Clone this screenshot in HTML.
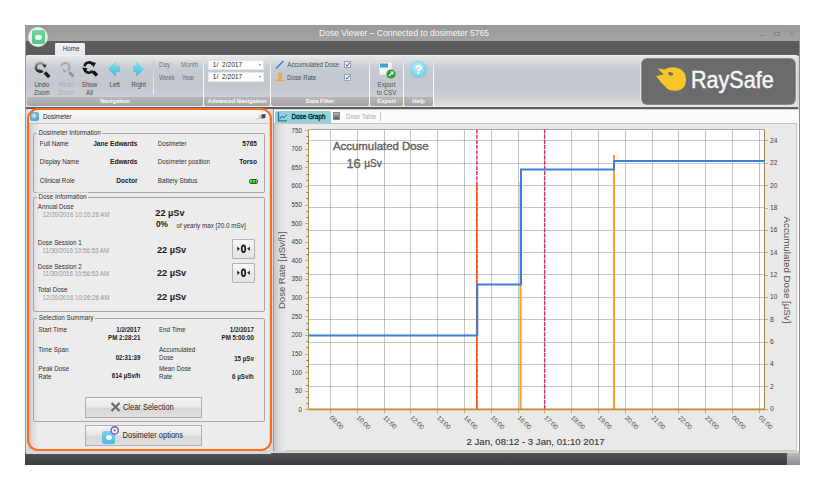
<!DOCTYPE html>
<html><head><meta charset="utf-8">
<style>
*{margin:0;padding:0;box-sizing:border-box}
html,body{width:825px;height:490px;background:#fff;overflow:hidden;font-family:"Liberation Sans",sans-serif;color:#333}
.a{position:absolute;white-space:nowrap}
.t6{font-size:6.2px;line-height:7px;transform:scaleY(1.15);transform-origin:0 50%}
.lbl{position:absolute;top:97px;height:8.5px;background:linear-gradient(#b6b8ba,#a2a4a7);color:#fbfbfb;font-size:5.8px;font-weight:bold;line-height:8px;border-radius:0 0 2px 2px;text-align:center;white-space:nowrap}
.gsep{position:absolute;top:56px;width:1px;height:50px;background:linear-gradient(#d0d2d4,#f8f8f8 30%,#f8f8f8)}
.btxt{position:absolute;font-size:6.2px;line-height:6.6px;text-align:center;color:#4a4a4a;white-space:nowrap;transform:scaleY(1.15);transform-origin:50% 50%}
</style></head><body>
<!-- window frame -->
<div class="a" style="left:25px;top:25px;width:775px;height:440px;background:#d4d4d4"></div>
<!-- title bar -->
<div class="a" style="left:25px;top:25px;width:775px;height:16px;background:linear-gradient(#999,#a4a4a4)"></div>
<div class="a" style="left:319px;top:28px;font-size:8.55px;line-height:10px;color:#f4f4f4">Dose Viewer – Connected to dosimeter 5765</div>
<!-- window controls -->
<div class="a" style="left:760px;top:34.5px;width:4.5px;height:1px;background:#858585"></div>
<div class="a" style="left:774px;top:32px;width:6px;height:3.8px;border:0.8px solid #858585;border-top-width:1.2px"></div>
<svg class="a" style="left:788px;top:30px" width="7" height="7"><path d="M1.2 1.2L5.6 5.8M5.6 1.2L1.2 5.8" stroke="#858585" stroke-width="0.9"/></svg>
<!-- tab row -->
<div class="a" style="left:25px;top:41px;width:775px;height:15px;background:#5c5c5c"></div>
<div class="a" style="left:55px;top:43px;width:30px;height:13px;background:linear-gradient(#eef1f8,#e3e7ef);border-radius:1px 1px 0 0"></div>
<div class="a" style="left:62.8px;top:44.6px;font-size:6.3px;line-height:8px;color:#3a3a3a;transform:scaleY(1.15)">Home</div>
<!-- app button -->
<div class="a" style="left:28.2px;top:27.1px;width:20px;height:20px;border-radius:50%;background:radial-gradient(circle at 50% 45%,#fafafa,#e6e6e6 75%,#cfcfcf);box-shadow:0 0 0.8px #777"></div>
<div class="a" style="left:31.8px;top:30.2px;width:13px;height:13.4px;border-radius:2px;background:linear-gradient(#74d69a,#54c884)"></div>
<div class="a" style="left:35.3px;top:34.5px;width:6.5px;height:5.5px;border-radius:45%;background:#f6fff9"></div>
<!-- ribbon -->
<div class="a" style="left:26px;top:55px;width:772px;height:52px;background:linear-gradient(#e6e9ec 0%,#d6dadf 12%,#c6cbd2 25%,#c2c7ce 55%,#cbcfd5 80%,#dfe2e6 100%);border-top:1px solid #eef0f2;border-radius:2px"></div>
<div class="a" style="left:26px;top:105.5px;width:772px;height:1px;background:#e8e8e8"></div>
<div class="a" style="left:26px;top:107px;width:772px;height:1.5px;background:#5e5e5e"></div>


<!-- ribbon groups -->
<div class="gsep" style="left:203px"></div>
<div class="gsep" style="left:270px"></div>
<div class="gsep" style="left:369px"></div>
<div class="gsep" style="left:403px"></div>
<div class="gsep" style="left:433px"></div>
<div class="lbl" style="left:27px;width:176px">Navigation</div>
<div class="lbl" style="left:204px;width:66px">Advanced Navigation</div>
<div class="lbl" style="left:271px;width:98px">Data Filter</div>
<div class="lbl" style="left:370px;width:33px">Export</div>
<div class="lbl" style="left:404px;width:29px">Help</div>
<div class="a" style="left:153px;top:61px;width:1px;height:33px;background:linear-gradient(#c0c3c6,#f2f3f4)"></div>
<!-- nav icons -->
<svg class="a" style="left:30px;top:58px" width="125" height="22" viewBox="0 0 125 22">
  <defs>
    <linearGradient id="gd" x1="0" y1="0" x2="0" y2="1"><stop offset="0" stop-color="#9a9a9a"/><stop offset="1" stop-color="#2a2a2a"/></linearGradient>
    <linearGradient id="cy" x1="0" y1="0" x2="0" y2="1"><stop offset="0" stop-color="#8fe0f2"/><stop offset="1" stop-color="#3bb8d8"/></linearGradient>
  </defs>
  <!-- undo -->
  <path d="M14.5 8.5A4.3 4.3 0 1 0 12.8 12.8" fill="none" stroke="url(#gd)" stroke-width="2.7"/>
  <path d="M12.6 6.8L17 6.8L14.8 10.2Z" fill="#3a3a3a"/>
  <path d="M9.2 10.8L12.6 13.6L9.6 15.4Z" fill="#2a2a2a"/>
  <path d="M14.8 14.5L19.3 19" stroke="#1e1e1e" stroke-width="3.4"/>
  <!-- redo -->
  <path d="M31 8.5A4.3 4.3 0 1 1 37.8 12.8" fill="none" stroke="#a6acb8" stroke-width="2.5"/>
  <path d="M33.2 10.5L36.5 13.5L33.5 15.2Z" fill="#9aa2ae"/>
  <path d="M39.2 14.2L43.5 18.5" stroke="#8c929c" stroke-width="3"/>
  <!-- show all -->
  <path d="M63 7A4.4 4.4 0 0 0 54.6 8.3" fill="none" stroke="#1a1a1a" stroke-width="2.6"/>
  <path d="M54.8 11.6A4.4 4.4 0 0 0 62.6 12.8" fill="none" stroke="#1a1a1a" stroke-width="2.6"/>
  <path d="M61 4L66 4.8L63.5 9.2Z" fill="#111"/>
  <path d="M52.2 9.4L54.6 14.2L57.6 10.2Z" fill="#111"/>
  <path d="M63 13.5L67 17.5" stroke="#111" stroke-width="3.3"/>
  <!-- left arrow -->
  <path d="M78 11L85.5 3.5L86.5 8H90V14H86.5L85.5 18.5Z" fill="url(#cy)"/>
  <!-- right arrow -->
  <path d="M114 11L106.5 3.5L105.5 8H103V14H105.5L106.5 18.5Z" fill="url(#cy)"/>
</svg>
<div class="btxt" style="left:30.8px;top:81.8px;width:22px">Undo<br>Zoom</div>
<div class="btxt" style="left:55px;top:81.8px;width:22px;color:#a8acb2">Redo<br>Zoom</div>
<div class="btxt" style="left:78.5px;top:81.8px;width:22px">Show<br>All</div>
<div class="btxt" style="left:103.7px;top:82px;width:22px">Left</div>
<div class="btxt" style="left:126.8px;top:82px;width:24px">Right</div>
<div class="a t6" style="left:159px;top:61.2px;color:#707070">Day</div>
<div class="a t6" style="left:181px;top:61.2px;color:#707070">Month</div>
<div class="a t6" style="left:159px;top:74px;color:#707070">Week</div>
<div class="a t6" style="left:181.8px;top:74px;color:#707070">Year</div>
<!-- adv nav -->
<div class="a" style="left:208px;top:59.6px;width:56px;height:10.4px;background:#fdfdfd;border:0.5px solid #e4e6e8"></div>
<div class="a" style="left:208px;top:71.6px;width:56px;height:10.4px;background:#fdfdfd;border:0.5px solid #e4e6e8"></div>
<div class="a" style="left:212.8px;top:61.1px;font-size:6.6px;line-height:7px;color:#2a2a2a;white-space:pre;transform:scaleY(1.1)">1/  2/2017</div>
<div class="a" style="left:212.8px;top:73.1px;font-size:6.6px;line-height:7px;color:#2a2a2a;white-space:pre;transform:scaleY(1.1)">1/  2/2017</div>
<div class="a" style="left:259px;top:63.5px;width:0;height:0;border-left:1.8px solid transparent;border-right:1.8px solid transparent;border-top:2.2px solid #8a8a8a"></div>
<div class="a" style="left:259px;top:75.5px;width:0;height:0;border-left:1.8px solid transparent;border-right:1.8px solid transparent;border-top:2.2px solid #8a8a8a"></div>
<!-- data filter -->
<svg class="a" style="left:274px;top:59px" width="12" height="24">
  <path d="M2 9.5L9.5 2" stroke="#3a78d8" stroke-width="1.5"/>
  <path d="M1.5 21.5H5V14.5H7V21.5H10.5" fill="none" stroke="#f4a028" stroke-width="1.3"/>
</svg>
<div class="a t6" style="left:287.3px;top:61.4px;color:#505050">Accumulated Dose</div>
<div class="a t6" style="left:287px;top:74px;color:#505050">Dose Rate</div>
<div class="a" style="left:344px;top:61px;width:7px;height:7px;background:linear-gradient(#e4e8ee,#fafbfc);border:1px solid #9aa4b0"></div>
<div class="a" style="left:344px;top:74px;width:7px;height:7px;background:linear-gradient(#e4e8ee,#fafbfc);border:1px solid #9aa4b0"></div>
<svg class="a" style="left:344px;top:61px" width="7" height="20">
  <path d="M1.8 3.6L3 5.2L5.6 1.6" fill="none" stroke="#2a4aa0" stroke-width="0.9"/>
  <path d="M1.8 16.6L3 18.2L5.6 14.6" fill="none" stroke="#2a4aa0" stroke-width="0.9"/>
</svg>
<!-- export -->
<svg class="a" style="left:376px;top:60px" width="22" height="20">
  <rect x="3" y="2" width="13" height="13" fill="#f4f6f8" stroke="#c6c9cc" stroke-width="0.7"/>
  <rect x="4" y="3.5" width="8" height="4" fill="#3aa0e0"/>
  <circle cx="15" cy="14" r="4.6" fill="#2f9a3a"/>
  <path d="M13 16L17 12M14.5 12H17V14.5" fill="none" stroke="#fff" stroke-width="1.1"/>
</svg>
<div class="btxt" style="left:375.5px;top:82px;width:22px;color:#505050">Export<br>to CSV</div>
<!-- help -->
<div class="a" style="left:410px;top:61px;width:17px;height:17px;border-radius:50%;background:radial-gradient(circle at 45% 35%,#c6eef8,#7fd0ea 60%,#5fbedf);box-shadow:0 0 1px #aac"></div>
<div class="a" style="left:413.5px;top:61.5px;width:10px;text-align:center;font-size:13px;line-height:16px;font-weight:bold;color:#fff">?</div>
<!-- raysafe logo -->
<div class="a" style="left:640px;top:57.5px;width:157px;height:47.5px;border-radius:6px;background:#e6e8ea"></div>
<div class="a" style="left:642px;top:59px;width:153px;height:44.5px;border-radius:5px;background:#6b6b6b;box-shadow:0 0 0 1px #8c8c8c"></div>
<svg class="a" style="left:0;top:0" width="825" height="120"><path d="M657.6 68.3L664.3 69.4Q668 67.2 673.6 67.3Q686 68.5 686 80Q685.5 90.8 675 90.8Q668 90.8 665 86.3Q661 83 659.3 79.9L656 76L663.6 74.4Z" fill="#f9c52b"/><ellipse cx="670.7" cy="73.8" rx="2.5" ry="1.7" transform="rotate(15 670.7 73.8)" fill="#6b6b6b"/></svg>
<div class="a" style="left:691px;top:66px;font-size:24.5px;line-height:28px;color:#f6f6f6;-webkit-text-stroke:0.5px #f6f6f6;transform:scaleX(0.88);transform-origin:0 0">RaySafe</div>



<!-- chart panel -->
<div class="a" style="left:271px;top:108.5px;width:529px;height:345px;background:#d8d8d8"></div>
<div class="a" style="left:273px;top:108.5px;width:526.5px;height:343px;background:#fbfbfb;border:1px solid #cfcfcf"></div>
<div class="a" style="left:274px;top:122.5px;width:523px;height:328.5px;background:#e9e9e9;border-top:1px solid #c8c4c0;border-right:1px solid #c8c4c0;border-bottom:1px solid #c8c4c0"></div>
<div class="a" style="left:274px;top:123.5px;width:12px;height:327px;background:linear-gradient(90deg,#c4c4c4,#e0e0e0 50%,#e9e9e9)"></div>
<div class="a" style="left:273px;top:109px;width:1px;height:342px;background:#9a9a9a"></div>
<div class="a" style="left:275px;top:111px;width:56px;height:11.5px;background:#8fd3df;border-radius:2px 2px 0 0"></div>
<svg class="a" style="left:277px;top:111px" width="11" height="11"><path d="M1.5 1V9.8H10" fill="none" stroke="#2a7898" stroke-width="1.2"/><path d="M2.5 8L5 5.2L6.8 6.8L9.8 3.5" fill="none" stroke="#1a5a90" stroke-width="1"/></svg>
<div class="a" style="top:112.60px;font-size:6.3px;line-height:8px;color:#0c3040;left:291.50px;transform:scaleY(1.15) ;transform-origin:0 50%;-webkit-text-stroke:0.35px #0c3040">Dose Graph</div>
<div class="a" style="left:333px;top:112px;width:7px;height:8px;background:linear-gradient(#b8bcc0,#50545a);border:0.5px solid #888"></div>
<div class="a" style="top:112.70px;font-size:6.1px;line-height:8px;color:#aaa;left:346.00px;transform:scaleY(1.15) ;transform-origin:0 50%;">Dose Table</div>
<div class="a" style="left:380px;top:112px;width:1px;height:9px;background:#c4c4c4"></div>
<svg class="a" style="left:0;top:0" width="825" height="490" font-family="Liberation Sans">
<rect x="308.5" y="129.5" width="456.5" height="280.0" fill="#fff"/>
<g stroke="#8c8c8c" stroke-width="1" stroke-dasharray="1 1"><path d="M308.5 386.5H765"/><path d="M308.5 364.5H765"/><path d="M308.5 342.5H765"/><path d="M308.5 319.5H765"/><path d="M308.5 297.5H765"/><path d="M308.5 274.5H765"/><path d="M308.5 252.5H765"/><path d="M308.5 230.5H765"/><path d="M308.5 207.5H765"/><path d="M308.5 185.5H765"/><path d="M308.5 163.5H765"/><path d="M308.5 140.5H765"/><path d="M330.5 129.5V409.5"/><path d="M357.5 129.5V409.5"/><path d="M384.5 129.5V409.5"/><path d="M410.5 129.5V409.5"/><path d="M437.5 129.5V409.5"/><path d="M464.5 129.5V409.5"/><path d="M491.5 129.5V409.5"/><path d="M518.5 129.5V409.5"/><path d="M544.5 129.5V409.5"/><path d="M571.5 129.5V409.5"/><path d="M598.5 129.5V409.5"/><path d="M625.5 129.5V409.5"/><path d="M652.5 129.5V409.5"/><path d="M678.5 129.5V409.5"/><path d="M705.5 129.5V409.5"/><path d="M732.5 129.5V409.5"/><path d="M759.5 129.5V409.5"/></g>
<path d="M308.5 129.5H765" stroke="#a8a8a8" stroke-width="1"/>
<path d="M308.5 129.5V409.5" stroke="#a0924e" stroke-width="1"/>
<path d="M764.5 129.5V409.5" stroke="#9a8a50" stroke-width="1"/>
<path d="M305 130.5H308M305 149.5H308M305 167.5H308M305 186.5H308M305 205.5H308M305 223.5H308M305 242.5H308M305 260.5H308M305 279.5H308M305 298.5H308M305 316.5H308M305 335.5H308M305 354.5H308M305 372.5H308M305 391.5H308M305 409.5H308M765 409.5H768M765 386.5H768M765 364.5H768M765 342.5H768M765 319.5H768M765 297.5H768M765 275.5H768M765 252.5H768M765 230.5H768M765 208.5H768M765 185.5H768M765 163.5H768M765 140.5H768M330.5 409V413.5M357.5 409V413.5M384.5 409V413.5M410.5 409V413.5M437.5 409V413.5M464.5 409V413.5M491.5 409V413.5M518.5 409V413.5M544.5 409V413.5M571.5 409V413.5M598.5 409V413.5M625.5 409V413.5M652.5 409V413.5M678.5 409V413.5M705.5 409V413.5M732.5 409V413.5M759.5 409V413.5" stroke="#c0b080" stroke-width="1" fill="none"/><path d="M306.5 136.5H308M306.5 143.5H308M306.5 155.5H308M306.5 161.5H308M306.5 174.5H308M306.5 180.5H308M306.5 192.5H308M306.5 198.5H308M306.5 211.5H308M306.5 217.5H308M306.5 229.5H308M306.5 236.5H308M306.5 248.5H308M306.5 254.5H308M306.5 267.5H308M306.5 273.5H308M306.5 285.5H308M306.5 292.5H308M306.5 304.5H308M306.5 310.5H308M306.5 323.5H308M306.5 329.5H308M306.5 341.5H308M306.5 347.5H308M306.5 360.5H308M306.5 366.5H308M306.5 378.5H308M306.5 385.5H308M306.5 397.5H308M306.5 403.5H308" stroke="#7a6a40" stroke-width="1" fill="none"/>
<g font-size="6.35" fill="#3c3c3c"><text x="302" y="132.5" text-anchor="end">750</text><text x="302" y="151.1" text-anchor="end">700</text><text x="302" y="169.7" text-anchor="end">650</text><text x="302" y="188.3" text-anchor="end">600</text><text x="302" y="207.0" text-anchor="end">550</text><text x="302" y="225.6" text-anchor="end">500</text><text x="302" y="244.2" text-anchor="end">450</text><text x="302" y="262.8" text-anchor="end">400</text><text x="302" y="281.4" text-anchor="end">350</text><text x="302" y="300.0" text-anchor="end">300</text><text x="302" y="318.6" text-anchor="end">250</text><text x="302" y="337.2" text-anchor="end">200</text><text x="302" y="355.9" text-anchor="end">150</text><text x="302" y="374.5" text-anchor="end">100</text><text x="302" y="393.1" text-anchor="end">50</text><text x="302" y="411.7" text-anchor="end">0</text></g>
<g font-size="6.6" fill="#3c3c3c"><text x="770" y="411.1">0</text><text x="770" y="388.7">2</text><text x="770" y="366.4">4</text><text x="770" y="344.0">6</text><text x="770" y="321.7">8</text><text x="770" y="299.3">10</text><text x="770" y="276.9">12</text><text x="770" y="254.6">14</text><text x="770" y="232.2">16</text><text x="770" y="209.9">18</text><text x="770" y="187.5">20</text><text x="770" y="165.1">22</text><text x="770" y="142.8">24</text></g>
<g font-size="6.6" fill="#505050"><text transform="translate(330.9 416.5) rotate(45)" x="0" y="2.3">09:00</text><text transform="translate(357.7 416.5) rotate(45)" x="0" y="2.3">10:00</text><text transform="translate(384.5 416.5) rotate(45)" x="0" y="2.3">11:00</text><text transform="translate(411.3 416.5) rotate(45)" x="0" y="2.3">12:00</text><text transform="translate(438.1 416.5) rotate(45)" x="0" y="2.3">13:00</text><text transform="translate(464.9 416.5) rotate(45)" x="0" y="2.3">14:00</text><text transform="translate(491.8 416.5) rotate(45)" x="0" y="2.3">15:00</text><text transform="translate(518.6 416.5) rotate(45)" x="0" y="2.3">16:00</text><text transform="translate(545.4 416.5) rotate(45)" x="0" y="2.3">17:00</text><text transform="translate(572.2 416.5) rotate(45)" x="0" y="2.3">18:00</text><text transform="translate(599.0 416.5) rotate(45)" x="0" y="2.3">19:00</text><text transform="translate(625.8 416.5) rotate(45)" x="0" y="2.3">20:00</text><text transform="translate(652.6 416.5) rotate(45)" x="0" y="2.3">21:00</text><text transform="translate(679.4 416.5) rotate(45)" x="0" y="2.3">22:00</text><text transform="translate(706.2 416.5) rotate(45)" x="0" y="2.3">23:00</text><text transform="translate(733.0 416.5) rotate(45)" x="0" y="2.3">00:00</text><text transform="translate(759.9 416.5) rotate(45)" x="0" y="2.3">01:00</text></g>
<path d="M476.9 129.5V409.5" stroke="#e22260" stroke-width="1.4" stroke-dasharray="4 1.2"/>
<path d="M544.7 129.5V409.5" stroke="#e22260" stroke-width="1.3" stroke-dasharray="4 1.2"/>
<path d="M476.7 409V183" stroke="#f05a28" stroke-width="1.6"/>
<path d="M520.5 409V182" stroke="#f8a028" stroke-width="2"/>
<path d="M614 409V155" stroke="#f8a028" stroke-width="2"/>
<path d="M308.5 335.4H477.3V284.5H521V169.6H614V161H765" fill="none" stroke="#3a7fd8" stroke-width="2"/>
<path d="M308.5 409.3H765" stroke="#c8862a" stroke-width="1.8"/>
<text x="282.5" y="309" transform="rotate(-90 282.5 309)" font-size="9.5" fill="#555" dominant-baseline="middle">Dose Rate [µSv/h]</text>
<text x="786.8" y="216.5" transform="rotate(90 786.8 216.5)" font-size="9.75" fill="#505050" dominant-baseline="middle">Accumulated Dose [µSv]</text>
<text x="466.5" y="444.5" font-size="9.6" fill="#3a3a3a" stroke="#3a3a3a" stroke-width="0.15">2 Jan, 08:12 - 3 Jan, 01:10 2017</text>
<text x="333" y="150.2" font-size="11.4" fill="#626262" stroke="#626262" stroke-width="0.4">Accumulated Dose</text>
<text x="346.5" y="168" font-size="12.8" fill="#626262" stroke="#626262" stroke-width="0.35">16 <tspan font-size="10" dy="-1.5">µSv</tspan></text>
</svg>
<div class="a" style="left:798.5px;top:41px;width:1.5px;height:424px;background:#8c8c8c"></div>
<div class="a" style="left:25px;top:41px;width:1.2px;height:424px;background:#9a9a9a"></div>
<!-- status bar -->
<div class="a" style="left:25px;top:453px;width:775px;height:12px;background:linear-gradient(#50535a,#3a3c40)"></div>
<div class="a" style="left:787px;top:453px;width:13px;height:12px;background:linear-gradient(#b8bcc0,#888c90)"></div>

<!-- left panel -->
<div class="a" style="left:26px;top:108.5px;width:245px;height:345px;background:#d8d8d8"></div>
<div class="a" style="left:29px;top:110px;width:240px;height:340px;background:#ececec"></div>
<div class="a" style="left:29px;top:123px;width:10px;height:327px;background:linear-gradient(90deg,#c8c6c6,#dcdcdc 35%,#ececec)"></div>
<div class="a" style="left:29px;top:110px;width:240px;height:13.5px;background:linear-gradient(#fbfbfb,#e8e8e8);border-bottom:1px solid #c4c4c4"></div>
<div class="a" style="left:30.2px;top:112.4px;width:8.5px;height:8.2px;border-radius:2.5px;background:radial-gradient(circle at 45% 40%,#f0dada 0,#d8d0d4 18%,#58b4d6 45%,#3d9fc8)"></div>
<div class="a" style="top:112.60px;font-size:6.3px;line-height:8px;color:#262626;left:43.00px;transform:scaleY(1.15) ;transform-origin:0 50%;">Dosimeter</div>
<svg class="a" style="left:255px;top:112px" width="12" height="9"><path d="M1.5 7.5L6.5 4.5" fill="none" stroke="#b8b8b8" stroke-width="0.8"/><path d="M5 2.5V7" stroke="#aaa" stroke-width="0.8"/><path d="M6.5 2.5L10.5 1.8V6L6.5 6.8Z" fill="#4a4a4e"/></svg>
<div class="a" style="left:32.5px;top:132.5px;width:232.0px;height:60.0px;border:1px solid #a6a6a6;border-radius:2px"></div><div class="a" style="top:128.60px;font-size:6.3px;line-height:8px;color:#2e2e2e;left:38.80px;transform:scaleY(1.15) ;transform-origin:0 50%;padding:0 1.5px;background:#ececec;margin-left:-1.5px">Dosimeter Information</div>
<div class="a" style="top:139.70px;font-size:6.3px;line-height:8px;color:#2e2e2e;left:39.80px;transform:scaleY(1.15) ;transform-origin:0 50%;">Full Name</div>
<div class="a" style="top:139.70px;font-size:6.6px;line-height:8px;color:#1a1a1a;font-weight:bold;right:687.50px;text-align:right;transform:scaleY(1.15) ;transform-origin:100% 50%;">Jane Edwards</div>
<div class="a" style="top:139.70px;font-size:6.3px;line-height:8px;color:#2e2e2e;left:157.80px;transform:scaleY(1.15) ;transform-origin:0 50%;">Dosimeter</div>
<div class="a" style="top:139.70px;font-size:6.6px;line-height:8px;color:#1a1a1a;font-weight:bold;right:568.00px;text-align:right;transform:scaleY(1.15) ;transform-origin:100% 50%;">5765</div>
<div class="a" style="top:158.30px;font-size:6.3px;line-height:8px;color:#2e2e2e;left:39.80px;transform:scaleY(1.15) ;transform-origin:0 50%;">Display Name</div>
<div class="a" style="top:158.30px;font-size:6.6px;line-height:8px;color:#1a1a1a;font-weight:bold;right:687.50px;text-align:right;transform:scaleY(1.15) ;transform-origin:100% 50%;">Edwards</div>
<div class="a" style="top:158.30px;font-size:6.3px;line-height:8px;color:#2e2e2e;left:157.80px;transform:scaleY(1.15) ;transform-origin:0 50%;">Dosimeter position</div>
<div class="a" style="top:158.30px;font-size:6.6px;line-height:8px;color:#1a1a1a;font-weight:bold;right:568.00px;text-align:right;transform:scaleY(1.15) ;transform-origin:100% 50%;">Torso</div>
<div class="a" style="top:177.00px;font-size:6.3px;line-height:8px;color:#2e2e2e;left:39.80px;transform:scaleY(1.15) ;transform-origin:0 50%;">Clinical Role</div>
<div class="a" style="top:177.00px;font-size:6.6px;line-height:8px;color:#1a1a1a;font-weight:bold;right:687.50px;text-align:right;transform:scaleY(1.15) ;transform-origin:100% 50%;">Doctor</div>
<div class="a" style="top:177.00px;font-size:6.3px;line-height:8px;color:#2e2e2e;left:157.80px;transform:scaleY(1.15) ;transform-origin:0 50%;">Battery Status</div>
<div class="a" style="left:248.9px;top:178.8px;width:9.2px;height:5.6px;background:linear-gradient(#7ee870,#36b836);border:0.7px solid #2a5a2a;border-radius:1.5px"></div>
<div class="a" style="left:251.8px;top:179.6px;width:0.7px;height:4px;background:#2a7a2a"></div><div class="a" style="left:254.6px;top:179.6px;width:0.7px;height:4px;background:#2a7a2a"></div>
<div class="a" style="left:32.5px;top:197px;width:232.0px;height:114.5px;border:1px solid #a6a6a6;border-radius:2px"></div><div class="a" style="top:193.30px;font-size:6.3px;line-height:8px;color:#2e2e2e;left:38.50px;transform:scaleY(1.15) ;transform-origin:0 50%;padding:0 1.5px;background:#ececec;margin-left:-1.5px">Dose Information</div>
<div class="a" style="top:202.60px;font-size:6.3px;line-height:8px;color:#2e2e2e;left:37.70px;transform:scaleY(1.15) ;transform-origin:0 50%;">Annual Dose</div>
<div class="a" style="top:210.50px;font-size:6.15px;line-height:8px;color:#959595;left:42.60px;transform:scaleY(1.15) ;transform-origin:0 50%;">12/20/2016 10:26:26 AM</div>
<div class="a" style="top:239.10px;font-size:6.3px;line-height:8px;color:#2e2e2e;left:37.70px;transform:scaleY(1.15) ;transform-origin:0 50%;">Dose Session 1</div>
<div class="a" style="top:246.70px;font-size:6.15px;line-height:8px;color:#959595;left:42.60px;transform:scaleY(1.15) ;transform-origin:0 50%;">11/30/2016 10:56:53 AM</div>
<div class="a" style="top:262.60px;font-size:6.3px;line-height:8px;color:#2e2e2e;left:37.70px;transform:scaleY(1.15) ;transform-origin:0 50%;">Dose Session 2</div>
<div class="a" style="top:270.40px;font-size:6.15px;line-height:8px;color:#959595;left:42.60px;transform:scaleY(1.15) ;transform-origin:0 50%;">11/30/2016 10:56:53 AM</div>
<div class="a" style="top:286.30px;font-size:6.3px;line-height:8px;color:#2e2e2e;left:37.70px;transform:scaleY(1.15) ;transform-origin:0 50%;">Total Dose</div>
<div class="a" style="top:294.20px;font-size:6.15px;line-height:8px;color:#959595;left:42.60px;transform:scaleY(1.15) ;transform-origin:0 50%;">12/20/2016 10:26:26 AM</div>
<div class="a" style="top:207.60px;font-size:9.2px;line-height:11px;color:#1a1a1a;font-weight:bold;left:155.30px;">22 µSv</div>
<div class="a" style="top:219.30px;font-size:8.3px;line-height:10px;color:#1a1a1a;font-weight:bold;left:156.00px;">0%</div>
<div class="a" style="top:221.60px;font-size:6.3px;line-height:8px;color:#2e2e2e;left:176.40px;transform:scaleY(1.15) ;transform-origin:0 50%;">of yearly max [20.0 mSv]</div>
<div class="a" style="top:244.70px;font-size:9.2px;line-height:11px;color:#1a1a1a;font-weight:bold;left:156.90px;">22 µSv</div>
<div class="a" style="top:267.70px;font-size:9.2px;line-height:11px;color:#1a1a1a;font-weight:bold;left:156.90px;">22 µSv</div>
<div class="a" style="top:291.60px;font-size:9.2px;line-height:11px;color:#1a1a1a;font-weight:bold;left:156.90px;">22 µSv</div>
<div class="a" style="left:232px;top:239px;width:23px;height:19.5px;background:linear-gradient(#f6f6f6,#e2e2e2);border:1px solid #b4b4b4;border-radius:1px"></div>
<svg class="a" style="left:232px;top:239px" width="23" height="20"><path d="M5.2 7.6L7.8 9.8L5.2 12Z" fill="#222"/><path d="M17.8 7.6L15.2 9.8L17.8 12Z" fill="#222"/><ellipse cx="11.5" cy="9.8" rx="1.75" ry="3.4" fill="none" stroke="#1a1a1a" stroke-width="1.7"/></svg>
<div class="a" style="left:232px;top:263px;width:23px;height:19.5px;background:linear-gradient(#f6f6f6,#e2e2e2);border:1px solid #b4b4b4;border-radius:1px"></div>
<svg class="a" style="left:232px;top:263px" width="23" height="20"><path d="M5.2 7.6L7.8 9.8L5.2 12Z" fill="#222"/><path d="M17.8 7.6L15.2 9.8L17.8 12Z" fill="#222"/><ellipse cx="11.5" cy="9.8" rx="1.75" ry="3.4" fill="none" stroke="#1a1a1a" stroke-width="1.7"/></svg>
<div class="a" style="left:32.5px;top:318px;width:232.0px;height:103.5px;border:1px solid #a6a6a6;border-radius:2px"></div><div class="a" style="top:314.40px;font-size:6.3px;line-height:8px;color:#2e2e2e;left:38.80px;transform:scaleY(1.15) ;transform-origin:0 50%;padding:0 1.5px;background:#ececec;margin-left:-1.5px">Selection Summary</div>
<div class="a" style="top:325.80px;font-size:6.3px;line-height:8px;color:#2e2e2e;left:38.20px;transform:scaleY(1.15) ;transform-origin:0 50%;">Start Time</div>
<div class="a" style="top:345.60px;font-size:6.3px;line-height:8px;color:#2e2e2e;left:38.20px;transform:scaleY(1.15) ;transform-origin:0 50%;">Time Span</div>
<div class="a" style="top:365.40px;font-size:6.3px;line-height:8px;color:#2e2e2e;left:38.20px;transform:scaleY(1.15) ;transform-origin:0 50%;">Peak Dose</div>
<div class="a" style="top:373.20px;font-size:6.3px;line-height:8px;color:#2e2e2e;left:38.20px;transform:scaleY(1.15) ;transform-origin:0 50%;">Rate</div>
<div class="a" style="top:325.80px;font-size:6.3px;line-height:8px;color:#2e2e2e;left:158.90px;transform:scaleY(1.15) ;transform-origin:0 50%;">End Time</div>
<div class="a" style="top:345.50px;font-size:6.3px;line-height:8px;color:#2e2e2e;left:158.90px;transform:scaleY(1.15) ;transform-origin:0 50%;">Accumulated</div>
<div class="a" style="top:353.80px;font-size:6.3px;line-height:8px;color:#2e2e2e;left:158.90px;transform:scaleY(1.15) ;transform-origin:0 50%;">Dose</div>
<div class="a" style="top:365.30px;font-size:6.3px;line-height:8px;color:#2e2e2e;left:158.90px;transform:scaleY(1.15) ;transform-origin:0 50%;">Mean Dose</div>
<div class="a" style="top:373.40px;font-size:6.3px;line-height:8px;color:#2e2e2e;left:158.90px;transform:scaleY(1.15) ;transform-origin:0 50%;">Rate</div>
<div class="a" style="top:325.80px;font-size:6.2px;line-height:8px;color:#1a1a1a;font-weight:bold;right:684.60px;text-align:right;transform:scaleY(1.15) ;transform-origin:100% 50%;">1/2/2017</div>
<div class="a" style="top:334.20px;font-size:6.2px;line-height:8px;color:#1a1a1a;font-weight:bold;right:684.60px;text-align:right;transform:scaleY(1.15) ;transform-origin:100% 50%;">PM 2:28:21</div>
<div class="a" style="top:354.40px;font-size:6.2px;line-height:8px;color:#1a1a1a;font-weight:bold;right:684.60px;text-align:right;transform:scaleY(1.15) ;transform-origin:100% 50%;">02:31:39</div>
<div class="a" style="top:372.20px;font-size:6.2px;line-height:8px;color:#1a1a1a;font-weight:bold;right:684.60px;text-align:right;transform:scaleY(1.15) ;transform-origin:100% 50%;">614 µSv/h</div>
<div class="a" style="top:325.80px;font-size:6.2px;line-height:8px;color:#1a1a1a;font-weight:bold;right:571.10px;text-align:right;transform:scaleY(1.15) ;transform-origin:100% 50%;">1/2/2017</div>
<div class="a" style="top:334.10px;font-size:6.2px;line-height:8px;color:#1a1a1a;font-weight:bold;right:571.10px;text-align:right;transform:scaleY(1.15) ;transform-origin:100% 50%;">PM 5:00:00</div>
<div class="a" style="top:355.20px;font-size:6.2px;line-height:8px;color:#1a1a1a;font-weight:bold;right:571.10px;text-align:right;transform:scaleY(1.15) ;transform-origin:100% 50%;">15 µSv</div>
<div class="a" style="top:373.00px;font-size:6.2px;line-height:8px;color:#1a1a1a;font-weight:bold;right:571.10px;text-align:right;transform:scaleY(1.15) ;transform-origin:100% 50%;">6 µSv/h</div>
<div class="a" style="left:85px;top:396.5px;width:117px;height:21px;background:linear-gradient(#f4f4f4,#e8e8e8 45%,#d8d8d8 55%,#e0e0e0);border:1px solid #aeaeae"></div>
<div class="a" style="left:85px;top:425px;width:117px;height:21px;background:linear-gradient(#f4f4f4,#e8e8e8 45%,#d8d8d8 55%,#e0e0e0);border:1px solid #aeaeae"></div>
<svg class="a" style="left:110px;top:402px" width="11" height="10"><path d="M1.5 1L9.5 9M9.5 1L1.5 9" stroke="#666" stroke-width="2"/></svg>
<div class="a" style="top:402.60px;font-size:7.5px;line-height:9px;color:#262626;left:122.90px;transform:scaleY(1.12) ;transform-origin:0 50%;">Clear Selection</div>
<div class="a" style="left:101.7px;top:430.5px;width:13.5px;height:13.5px;border-radius:2.5px;background:linear-gradient(#7ccfee,#4fb8e0)"></div>
<div class="a" style="left:105.5px;top:434.5px;width:6.5px;height:5.5px;border-radius:45%;background:#f2faff"></div>
<svg class="a" style="left:109px;top:425px" width="12" height="12"><circle cx="5.7" cy="5.4" r="3.6" fill="#f4f0fa" stroke="#8458c4" stroke-width="1.5"/><circle cx="5.7" cy="5.4" r="1" fill="#8458c4"/></svg>
<div class="a" style="top:430.80px;font-size:7.5px;line-height:9px;color:#262626;left:122.60px;transform:scaleY(1.12) ;transform-origin:0 50%;">Dosimeter options</div>
<div class="a" style="left:27.2px;top:107.8px;width:245px;height:343px;border:2.1px solid #fb6a1e;border-radius:11px"></div>
</body></html>
